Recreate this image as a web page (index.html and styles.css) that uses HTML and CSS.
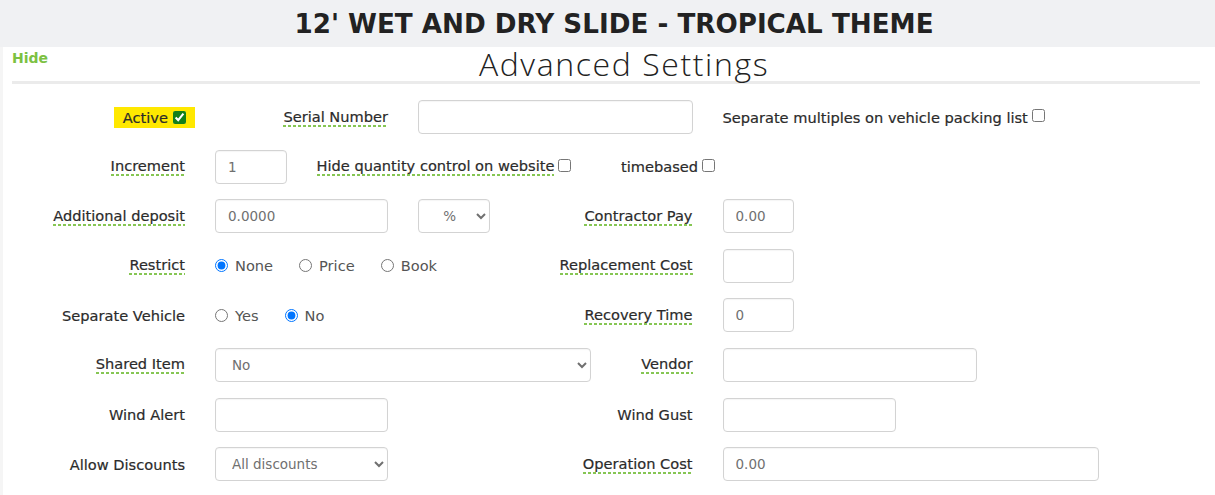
FILE: index.html
```html
<!DOCTYPE html>
<html lang="en">
<head>
  <meta charset="UTF-8">
  <title>Advanced Settings</title>
  <meta name="viewport" content="width=device-width, initial-scale=1.0"/>
  <link rel="stylesheet" href="styles.css">
</head>
<body>

<header class="title-bar">
  <h1>12' WET AND DRY SLIDE - TROPICAL THEME</h1>
</header>

<div class="settings">
  <a class="hide-link" href="#">Hide</a>
  <h2 class="section-title">Advanced Settings</h2>

  <div class="form-row">
    <div class="cell label span-2 active-cell">
      <span class="active-mark">Active <input type="checkbox" class="active-check" checked></span>
    </div>
    <div class="cell label span-2"><span class="hint">Serial Number</span></div>
    <div class="cell span-3"><input type="text" class="field"></div>
    <div class="cell span-5">Separate multiples on vehicle packing list <input type="checkbox" class="check"></div>
  </div>

  <div class="form-row">
    <div class="cell label span-2"><span class="hint">Increment</span></div>
    <div class="cell span-1"><input type="text" class="field" value="1"></div>
    <div class="cell span-3"><span class="hint">Hide quantity control on website</span><input type="checkbox" class="check"></div>
    <div class="cell span-2">timebased <input type="checkbox" class="check"></div>
  </div>

  <div class="form-row">
    <div class="cell label span-2"><span class="hint">Additional deposit</span></div>
    <div class="cell span-2"><input type="text" class="field" value="0.0000"></div>
    <div class="cell span-1">
      <select class="field select-center"><option>%</option></select>
    </div>
    <div class="cell label span-2"><span class="hint">Contractor Pay</span></div>
    <div class="cell span-1"><input type="text" class="field" value="0.00"></div>
  </div>

  <div class="form-row">
    <div class="cell label span-2"><span class="hint">Restrict</span></div>
    <div class="cell span-3">
      <label class="option"><input type="radio" name="restrict" checked> None</label>
      <label class="option"><input type="radio" name="restrict"> Price</label>
      <label class="option"><input type="radio" name="restrict"> Book</label>
    </div>
    <div class="cell label span-2"><span class="hint">Replacement Cost</span></div>
    <div class="cell span-1"><input type="text" class="field"></div>
  </div>

  <div class="form-row">
    <div class="cell label span-2">Separate Vehicle</div>
    <div class="cell span-3">
      <label class="option"><input type="radio" name="vehicle"> Yes</label>
      <label class="option"><input type="radio" name="vehicle" checked> No</label>
    </div>
    <div class="cell label span-2"><span class="hint">Recovery Time</span></div>
    <div class="cell span-1"><input type="text" class="field" value="0"></div>
  </div>

  <div class="form-row">
    <div class="cell label span-2"><span class="hint">Shared Item</span></div>
    <div class="cell span-4">
      <select class="field"><option>No</option></select>
    </div>
    <div class="cell label span-1"><span class="hint">Vendor</span></div>
    <div class="cell span-3"><input type="text" class="field vendor-field"></div>
  </div>

  <div class="form-row">
    <div class="cell label span-2">Wind Alert</div>
    <div class="cell span-2"><input type="text" class="field"></div>
    <div class="cell label span-3">Wind Gust</div>
    <div class="cell span-2"><input type="text" class="field"></div>
  </div>

  <div class="form-row">
    <div class="cell label span-2">Allow Discounts</div>
    <div class="cell span-2">
      <select class="field"><option>All discounts</option></select>
    </div>
    <div class="cell label span-3"><span class="hint">Operation Cost</span></div>
    <div class="cell span-4"><input type="text" class="field" value="0.00"></div>
  </div>
</div>

</body>
</html>
```

FILE: styles.css
```css
body {
  margin: 0;
  font-family: "DejaVu Sans", sans-serif;
  font-size: 14.6px;
  color: #2b2b2b;
  background-color: #fff;
  box-shadow: inset 3px 0 0 #f5f5f5;
  min-height: 100vh;
}
.title-bar {
  background-color: #f0f1f3;
  height: 47px;
  padding-left: 13px;
  display: flex;
  align-items: center;
  justify-content: center;
}
.title-bar h1 {
  margin: 0;
  font-size: 26.2px;
  font-weight: bold;
  color: #222;
}
.settings {
  padding: 0 15px 0 12px;
}
.hide-link {
  float: left;
  margin-top: 3px;
  color: #7cc142;
  font-weight: bold;
  font-size: 14px;
  text-decoration: none;
}
.section-title {
  margin: 0 0 16px;
  font-family: "Open Sans", sans-serif;
  font-weight: 300;
  font-size: 32px;
  line-height: 34px;
  letter-spacing: 1.6px;
  text-align: center;
  color: #222;
  border-bottom: 3px solid #ebebeb;
}
.form-row {
  display: grid;
  grid-template-columns: repeat(12, 1fr);
  margin: 0 -15px 15.6px;
  height: 34px;
}
.cell {
  padding: 0 15px;
  display: flex;
  align-items: center;
  white-space: nowrap;
  min-width: 0;
  -webkit-text-stroke: 0.2px #2b2b2b;
}
.cell.label {
  justify-content: flex-end;
}
.span-1 { grid-column: span 1; }
.span-2 { grid-column: span 2; }
.span-3 { grid-column: span 3; }
.span-4 { grid-column: span 4; }
.span-5 { grid-column: span 5; }

.hint {
  padding-bottom: 2px;
  background: repeating-linear-gradient(to right, #86c653 0 3px, transparent 3px 5px) left bottom / 100% 2px no-repeat;
}
.active-cell {
  padding-right: 5px;
}
.active-mark {
  background-color: #ffe800;
  padding: 2px 9px 2px 9px;
  display: inline-flex;
  align-items: center;
}
.active-check {
  accent-color: #137f1a;
  margin: 0 0 0 5px;
}
.check {
  margin: 0 0 3px 4px;
}
.field {
  width: 100%;
  height: 34px;
  box-sizing: border-box;
  border: 1px solid #d3d3d3;
  border-radius: 4px;
  padding: 0 12px;
  font-family: "DejaVu Sans", sans-serif;
  font-size: 13.5px;
  color: #707070;
  background-color: #fff;
  box-shadow: inset 0 1px 1px rgba(0, 0, 0, 0.04);
  -webkit-text-stroke: 0;
}
select.field {
  padding: 0 8px 0 12px;
}
.select-center {
  text-align: center;
}
.vendor-field {
  width: 254px;
}
.option {
  display: inline-flex;
  align-items: center;
  gap: 7px;
  margin-right: 26px;
  color: #555;
  -webkit-text-stroke: 0;
}
.option input {
  margin: 0;
}
```
